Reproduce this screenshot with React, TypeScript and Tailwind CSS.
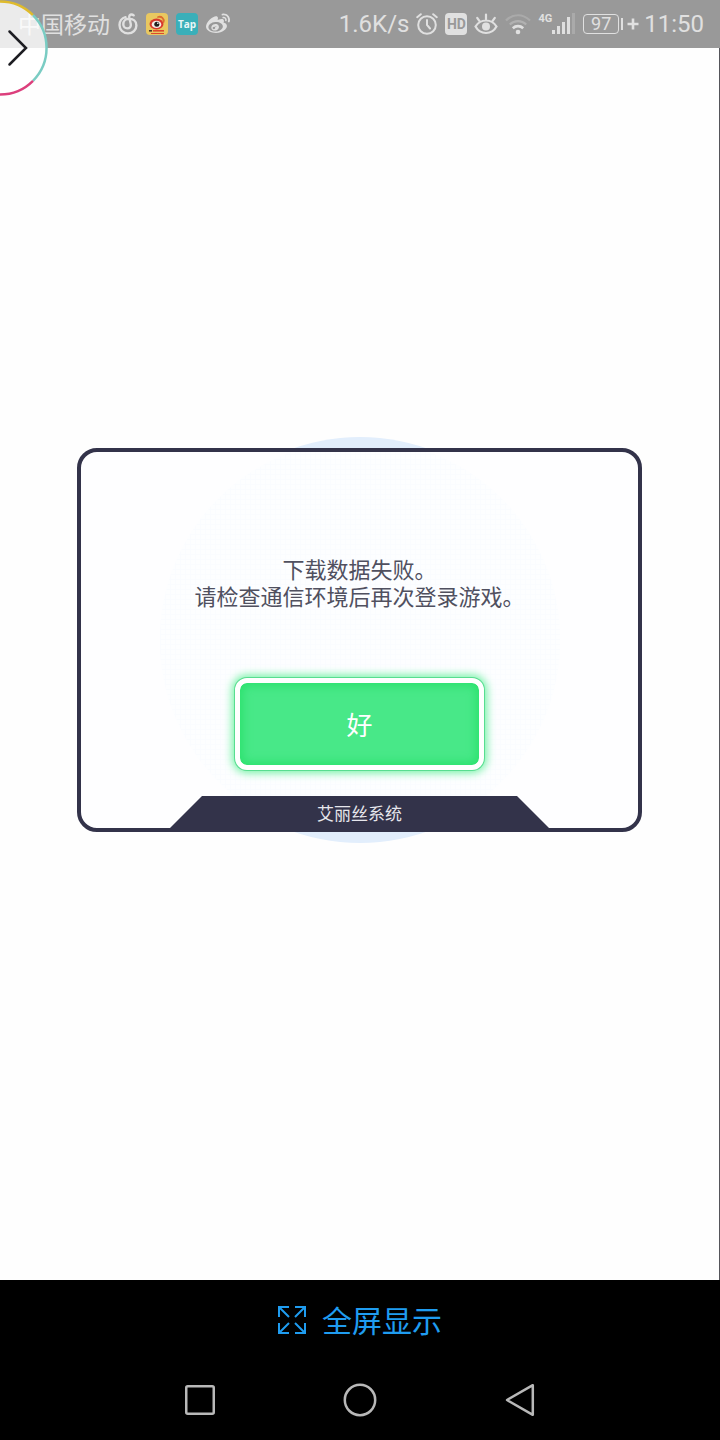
import React from 'react';
import { FaWeibo } from 'react-icons/fa';

const CloudMusicIcon: React.FC = () => (
  <svg width="20" height="22" viewBox="0 0 20 22" fill="none" stroke="currentColor" strokeWidth="2.400" strokeLinecap="round">
    <path d="M7.500 4.200C3.800 5 1.500 8.300 1.500 12c0 4.800 3.700 8.400 8.500 8.400s8.400-3.600 8.400-8c0-4.200-3.400-6.600-7.600-6.600-3.200 0-5.500 2.400-5.500 5.400 0 2.600 1.800 4.200 4 4.200 2.500 0 3.900-1.900 3.500-4.100L11.300 4.600c-.4-2 .8-3.100 2.200-3.100.9 0 1.600.3 2.200.8" />
  </svg>
);

const WeiboAppIcon: React.FC = () => (
  <svg width="22" height="22" viewBox="0 0 22 22">
    <rect width="22" height="22" rx="4" fill="#e9c860" />
    <ellipse cx="10.500" cy="11" rx="7" ry="5.400" fill="#d8392d" />
    <path d="M12 4c3.500-1 6.500 1.500 5.500 5" fill="none" stroke="#dd6a30" strokeWidth="1.800" strokeLinecap="round" />
    <ellipse cx="10.500" cy="11.400" rx="4.800" ry="3.700" fill="#f4ece6" />
    <circle cx="10.800" cy="11.300" r="2.500" fill="#22201f" />
    <circle cx="11.800" cy="10.300" r="0.800" fill="#fff" />
    <path d="M3 17.800h3" stroke="#4d3326" strokeWidth="1.600" />
    <path d="M7 17.800h11" stroke="#dc4a2c" strokeWidth="1.600" />
    <path d="M5 20.500h13" stroke="#dc4a2c" strokeWidth="1" />
  </svg>
);

const AlarmIcon: React.FC = () => (
  <svg width="22" height="22" viewBox="0 0 22 22" fill="none" stroke="currentColor" strokeWidth="2" strokeLinecap="round">
    <circle cx="11" cy="12" r="8.800" />
    <path d="M11 7v5l3 3.500M1.200 4.200l3.600-3M20.800 4.200l-3.600-3" />
  </svg>
);

const EyeIcon: React.FC = () => (
  <svg width="24" height="22" viewBox="0 0 24 22" fill="none" stroke="currentColor" strokeWidth="2.200" strokeLinecap="round">
    <path d="M1.500 13.500C4 9.500 7.500 7.500 12 7.500s8 2 10.500 6C20 18 16.500 20 12 20S4 18 1.500 13.500zM12 6V1.500M5.500 8.200L3.200 4.800M18.500 8.200l2.300-3.400" />
    <circle cx="12" cy="13.500" r="4" fill="currentColor" stroke="none" />
  </svg>
);

const WifiIcon: React.FC = () => (
  <svg width="26" height="22" viewBox="0 0 26 22" fill="none" stroke="currentColor" strokeWidth="2.200">
    <path d="M1 7.500C8 .500 18 .500 25 7.500" opacity="0.250" />
    <path d="M4.800 11.500C9.500 7 16.500 7 21.200 11.500" opacity="0.350" />
    <path d="M7.800 15.200c3-2.800 7.400-2.800 10.400 0" strokeWidth="2.600" />
    <circle cx="13" cy="19" r="2.300" fill="currentColor" stroke="none" />
  </svg>
);

const SignalIcon: React.FC = () => (
  <svg width="24" height="22" viewBox="0 0 24 22" fill="currentColor">
    <rect x="0" y="17" width="3" height="4" />
    <rect x="5" y="13" width="3" height="8" />
    <rect x="10" y="9" width="3" height="12" />
    <rect x="15" y="4" width="3" height="17" />
    <rect x="20" y="0" width="3" height="21" opacity="0.250" />
  </svg>
);

const StatusBar: React.FC = () => (
  <header className="flex h-12 items-center justify-between bg-[#999999] pr-4 pl-[18px] text-[#e0e0e0]">
    <div className="flex items-center gap-2">
      <span className="pt-1 text-[23px] leading-8">中国移动</span>
      <CloudMusicIcon />
      <WeiboAppIcon />
      <span className="flex size-[22px] items-center justify-center rounded bg-[#3aafb9] font-['Open_Sans',sans-serif] text-[10px] font-bold text-[#eaf6f7]">
        Tap
      </span>
      <FaWeibo size={24} />
    </div>

    <div className="flex items-center gap-[7px]">
      <span className="text-2xl">1.6K/s</span>
      <AlarmIcon />
      <span className="flex size-[22px] items-center justify-center rounded-sm bg-[#e0e0e0] text-sm font-bold text-[#999999]">
        HD
      </span>
      <EyeIcon />
      <WifiIcon />
      <div className="flex">
        <span className="text-[11px] leading-3 font-bold">4G</span>
        <SignalIcon />
      </div>
      <div className="flex items-center">
        <span className="flex h-5 w-9 items-center justify-center rounded-sm border border-[#e0e0e0] text-lg leading-5">97</span>
        <span className="ml-0.5 h-3 w-0.5 bg-[#e0e0e0]" />
        <svg className="mr-[5px] ml-1" width="12" height="12" viewBox="0 0 12 12" stroke="currentColor" strokeWidth="2.600">
          <path d="M6 0.500v11M0.500 6h11" />
        </svg>
        <span className="text-2xl">11:50</span>
      </div>
    </div>
  </header>
);

// Round handle that hangs over the left screen edge
const FloatingHandle: React.FC = () => (
  <button type="button" aria-label="展开" className="absolute top-0 left-0">
    <svg width="48" height="96" viewBox="0 0 48 96" fill="none" strokeWidth="2.500">
      <circle cx="0" cy="48" r="46.500" fill="#ffffff" fillOpacity="0.800" />
      <path d="M0 1.500A46.500 46.500 0 0 1 33 15.200" stroke="#dfbb2c" />
      <path d="M33 15.200A46.500 46.500 0 0 1 33 80.800" stroke="#7accc3" />
      <path d="M33 80.800A46.500 46.500 0 0 1 0 94.500" stroke="#dc3f7c" />
      <path d="M9.500 31.500L26 48 9.500 64.500" stroke="#1d1d22" strokeLinecap="round" />
    </svg>
  </button>
);

const ErrorDialog: React.FC = () => (
  <section
    role="alertdialog"
    aria-labelledby="dialog-title"
    aria-describedby="dialog-message"
    className="relative w-full max-w-[565px]"
  >
    {/* Pale disc behind the panel */}
    <div className="absolute top-1/2 left-1/2 size-[406px] -translate-x-1/2 -translate-y-1/2 rounded-full bg-[#e2eefc]" />

    <div className="relative flex flex-col items-center overflow-hidden rounded-[20px] border-4 border-[#33334a] bg-[#fefeff]">
      <div className="absolute top-1/2 left-1/2 size-[400px] -translate-x-1/2 -translate-y-1/2 rounded-full bg-[#fdfeff] bg-[repeating-linear-gradient(90deg,#fafcff_0_1px,transparent_1px_5px),repeating-linear-gradient(0deg,#fafcff_0_1px,transparent_1px_5px)]" />

      <p id="dialog-message" className="relative pt-[105px] text-center text-[22px] leading-[27px] text-[#50505f]">
        下载数据失败。
        <br />
        请检查通信环境后再次登录游戏。
      </p>

      <button
        type="button"
        className="relative mt-[67px] h-[92px] w-[249px] rounded-xl border-[5px] border-white bg-[#48e888] bg-clip-padding pt-1 text-[26px] text-white shadow-[0_0_0_1px_#58dd90,0_0_9px_3px_#72f2a4,inset_0_0_10px_3px_#2ce26e]"
      >
        好
      </button>

      <h1
        id="dialog-title"
        className="relative mt-[26px] flex h-8 w-[379px] items-center justify-center bg-[#33334a] pt-1.5 text-[17px] text-[#e6e6ec] [clip-path:polygon(32px_0,calc(100%_-_32px)_0,100%_100%,0_100%)]"
      >
        艾丽丝系统
      </h1>
    </div>
  </section>
);

const BottomBar: React.FC = () => (
  <footer className="bg-black">
    <button type="button" className="mx-auto flex h-20 items-center gap-4 text-3xl text-[#1f9cf0]">
      <svg width="28" height="28" viewBox="0 0 28 28" fill="none" stroke="currentColor" strokeWidth="2">
        <path d="M1 11V1h10M1 1l10 10M17 1h10v10M27 1L17 11M1 17v10h10M1 27l10-10M27 17v10H17M27 27L17 17" />
      </svg>
      <span className="pt-1">全屏显示</span>
    </button>

    <nav className="mx-auto grid h-20 w-2/3 grid-cols-3 items-center justify-items-center text-[#b8b8b8]">
      <button type="button" aria-label="最近任务">
        <svg width="32" height="32" viewBox="0 0 32 32" fill="none" stroke="currentColor" strokeWidth="2.500">
          <rect x="2.250" y="2.250" width="27.500" height="27.500" rx="1.500" />
        </svg>
      </button>
      <button type="button" aria-label="主页">
        <svg width="34" height="34" viewBox="0 0 34 34" fill="none" stroke="currentColor" strokeWidth="2.500">
          <circle cx="17" cy="17" r="15.200" />
        </svg>
      </button>
      <button type="button" aria-label="返回">
        <svg width="30" height="34" viewBox="0 0 30 34" fill="none" stroke="currentColor" strokeWidth="2.500" strokeLinejoin="round">
          <path d="M27.800 2.200v29.600L2 17z" />
        </svg>
      </button>
    </nav>
  </footer>
);

export default function App() {
  return (
    <div className="relative flex min-h-screen flex-col font-['Roboto','Noto_Sans_CJK_SC',sans-serif]">
      <StatusBar />
      <main className="flex flex-1 items-center justify-center border-r border-[#55555a] bg-[#fefefe] px-6 pb-12">
        <ErrorDialog />
      </main>
      <BottomBar />
      <FloatingHandle />
    </div>
  );
}
